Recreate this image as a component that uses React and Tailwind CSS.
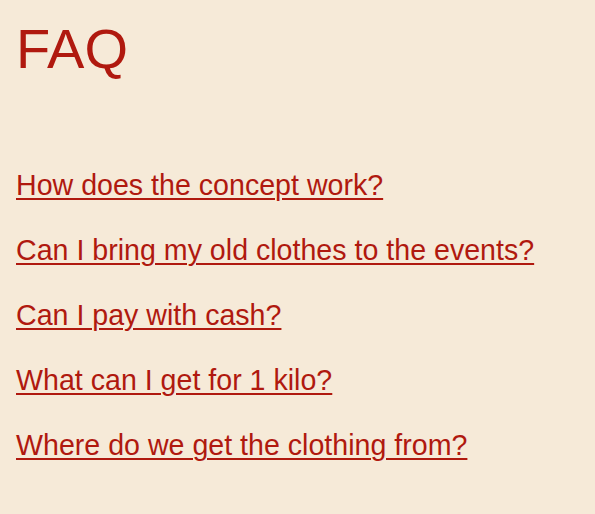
import React from 'react';

const questions = [
  'How does the concept work?',
  'Can I bring my old clothes to the events?',
  'Can I pay with cash?',
  'What can I get for 1 kilo?',
  'Where do we get the clothing from?',
];

const App = () => {
  return (
    <div className="min-h-[514px] w-full bg-[#f6ead8] px-4 pt-[17px] font-['Liberation_Sans',Arial,sans-serif] text-[#b0190f]">
      <h1 className="text-[56px] leading-[64px] font-normal">FAQ</h1>
      <ul className="mt-[72px] flex flex-col">
        {questions.map((q) => (
          <li key={q} className="h-[65px] text-[28.6px] leading-[65px]">
            <a href="#" className="underline decoration-[2px] underline-offset-[3px]">
              {q}
            </a>
          </li>
        ))}
      </ul>
    </div>
  );
};

export default App;
